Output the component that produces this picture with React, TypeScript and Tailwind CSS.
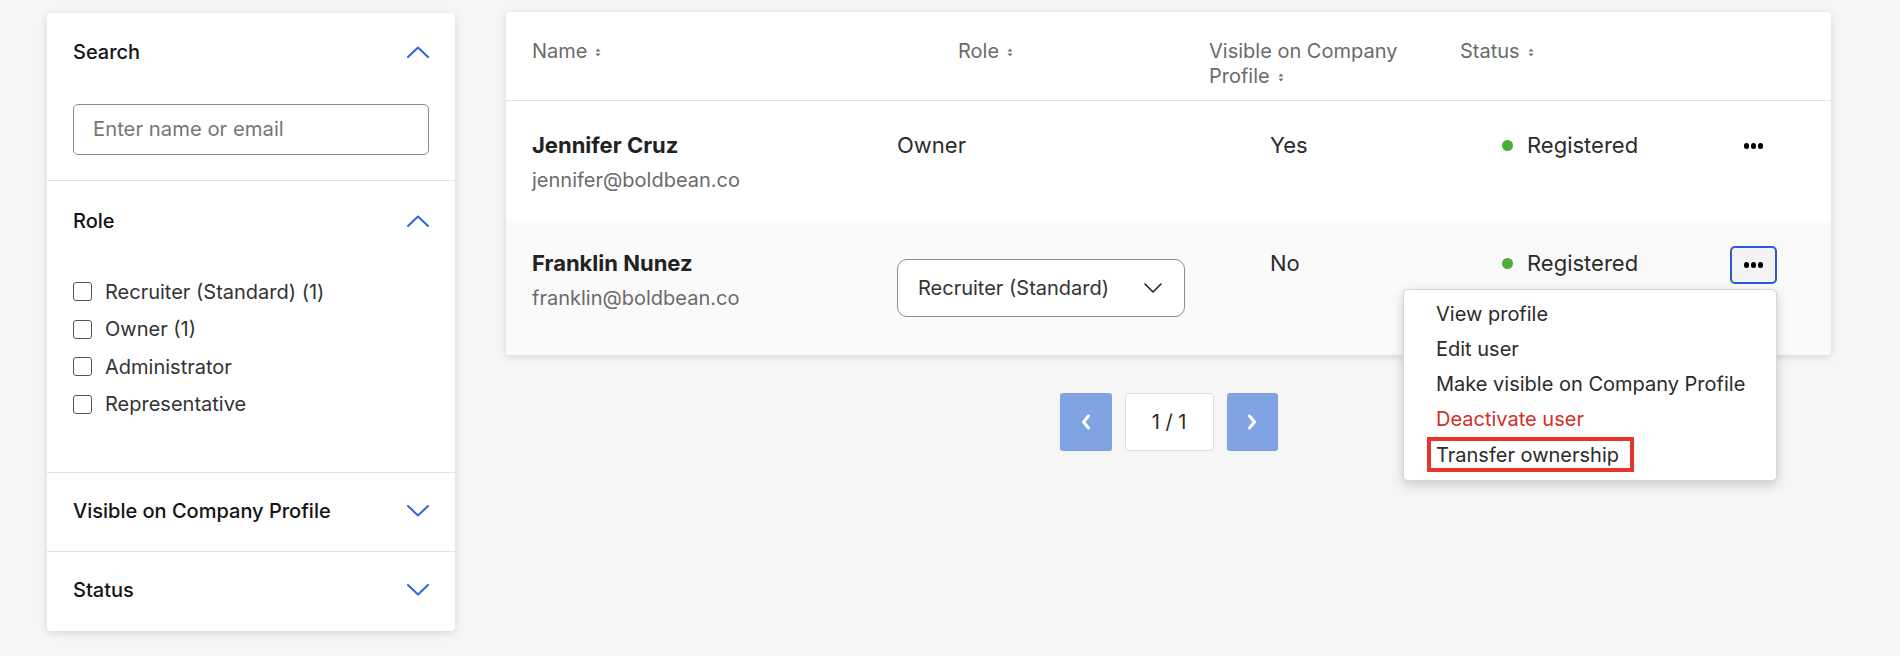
import React from "react";

const Chevron = ({ up }: { up?: boolean }) => (
  <svg width="22" height="12" viewBox="0 0 22 12" fill="none">
    {up ? (
      <path d="M1 11L11 1.5L21 11" stroke="#2b67dd" strokeWidth="2" strokeLinecap="round" strokeLinejoin="round" />
    ) : (
      <path d="M1 1L11 10.5L21 1" stroke="#2b67dd" strokeWidth="2" strokeLinecap="round" strokeLinejoin="round" />
    )}
  </svg>
);

const SortIcon = () => (
  <svg width="6" height="9" viewBox="0 0 6 9" className="ml-[8px] inline-block align-middle">
    <path d="M3 0.5L5.5 3.5H0.5Z" fill="#777" />
    <path d="M3 8.5L5.5 5.5H0.5Z" fill="#777" />
  </svg>
);

const Dots = () => (
  <div className="flex gap-[1.5px]">
    <span className="w-[5.5px] h-[5.5px] rounded-full bg-black" />
    <span className="w-[5.5px] h-[5.5px] rounded-full bg-black" />
    <span className="w-[5.5px] h-[5.5px] rounded-full bg-black" />
  </div>
);

const Section = ({
  title,
  open,
  children,
  cls,
}: {
  title: string;
  open?: boolean;
  children?: React.ReactNode;
  cls: string;
}) => (
  <div className={`px-[26px] ${cls}`}>
    <div className="h-[28px] flex items-center justify-between">
      <span className="text-[20px] font-medium text-[#141414] leading-[28px]">{title}</span>
      <Chevron up={open} />
    </div>
    {children}
  </div>
);

const roles = ["Recruiter (Standard) (1)", "Owner (1)", "Administrator", "Representative"];

export default function App() {
  return (
    <div className="min-h-screen w-full bg-[#f6f6f6] font-['Inter',sans-serif] flex items-start pl-[47px] pt-[12px]">
      <aside className="mt-[1px] w-[408px] shrink-0 bg-white rounded-[4px] shadow-[0_2px_8px_rgba(0,0,0,0.13)]">
        <Section title="Search" open cls="pt-[25px] pb-[25px] border-b border-[#e2e2e2]">
          <div className="mt-[38px] h-[51px] border border-[#8c8c8c] rounded-[5px] flex items-center pl-[19px] text-[20.3px] text-[#777]">
            Enter name or email
          </div>
        </Section>
        <Section title="Role" open cls="pt-[26px] pb-[49px] border-b border-[#e2e2e2]">
          <div className="mt-[38px] flex flex-col">
            {roles.map((r) => (
              <div key={r} className="h-[37.5px] flex items-center gap-[13px]">
                <span className="w-[19px] h-[19px] border-[1.5px] border-[#555] rounded-[3px] bg-white" />
                <span className="text-[20px] text-[#333]">{r}</span>
              </div>
            ))}
          </div>
        </Section>
        <Section title="Visible on Company Profile" cls="pt-[24px] pb-[26px] border-b border-[#e2e2e2]" />
        <Section title="Status" cls="pt-[24px] pb-[27px]" />
      </aside>

      <main className="ml-[51px] w-[1325px] shrink-0 flex flex-col items-center">
        <div className="w-full bg-white rounded-[4px] shadow-[0_2px_8px_rgba(0,0,0,0.13)]">
          {/* header */}
          <div className="h-[89px] border-b border-[#e2e2e2] flex pl-[26px] pt-[27px] text-[20px] leading-[25px] text-[#6b6b6b]">
            <div className="w-[426px]">
              Name
              <SortIcon />
            </div>
            <div className="w-[251px]">
              Role
              <SortIcon />
            </div>
            <div className="w-[251px] pr-[40px]">
              Visible on Company Profile
              <SortIcon />
            </div>
            <div>
              Status
              <SortIcon />
            </div>
          </div>

          {/* row 1 */}
          <div className="h-[120px] flex pl-[26px] pt-[30px] text-[22px] text-[#2b2b2b]">
            <div className="w-[365px]">
              <div className="font-bold leading-[29px] text-[#222]">Jennifer Cruz</div>
              <div className="mt-[7px] text-[20px] leading-[27px] text-[#6b6b6b]">jennifer@boldbean.co</div>
            </div>
            <div className="w-[373px] leading-[29px]">Owner</div>
            <div className="w-[232px] leading-[29px]">Yes</div>
            <div className="w-[228px] h-[29px] flex items-center gap-[14px]">
              <span className="w-[11px] h-[11px] rounded-full bg-[#4ead32]" />
              <span>Registered</span>
            </div>
            <div className="w-[47px] h-[38px] -mt-[4px] flex items-center justify-center">
              <Dots />
            </div>
          </div>

          {/* row 2 */}
          <div className="h-[134px] flex pl-[26px] pt-[28px] bg-[#fafafa] rounded-b-[4px] text-[22px] text-[#2b2b2b]">
            <div className="w-[365px]">
              <div className="font-bold leading-[29px] text-[#222]">Franklin Nunez</div>
              <div className="mt-[7px] text-[20px] leading-[27px] text-[#6b6b6b]">franklin@boldbean.co</div>
            </div>
            <div className="w-[373px] pt-[10px]">
              <div className="w-[288px] h-[58px] bg-white border border-[#8c8c8c] rounded-[10px] flex items-center justify-between pl-[20px] pr-[22px] text-[20px] text-[#333]">
                <span>Recruiter (Standard)</span>
                <svg width="18" height="10" viewBox="0 0 18 10" fill="none">
                  <path d="M1 1L9 9L17 1" stroke="#222" strokeWidth="1.6" strokeLinecap="round" strokeLinejoin="round" />
                </svg>
              </div>
            </div>
            <div className="w-[232px] leading-[29px]">No</div>
            <div className="w-[228px] h-[29px] flex items-center gap-[14px]">
              <span className="w-[11px] h-[11px] rounded-full bg-[#4ead32]" />
              <span>Registered</span>
            </div>
            <div className="relative w-[47px] h-[38px] -mt-[3px]">
              <div className="w-[47px] h-[38px] border-2 border-[#2a5bd7] rounded-[5px] bg-[#f3f3f3] flex items-center justify-center">
                <Dots />
              </div>
              <div className="absolute right-0 top-[43px] z-10 w-[374px] bg-white border border-[#d6d6d6] rounded-[5px] shadow-[0_4px_12px_rgba(0,0,0,0.18)] pt-[6px] pb-[9px] text-[20px] text-[#2b2b2b]">
                <div className="h-[35px] flex items-center pl-[32px]">View profile</div>
                <div className="h-[35px] flex items-center pl-[32px]">Edit user</div>
                <div className="h-[35px] flex items-center pl-[32px]">Make visible on Company Profile</div>
                <div className="h-[35px] flex items-center pl-[32px] text-[#d22f2a]">Deactivate user</div>
                <div className="h-[35px] flex items-center pl-[23px]">
                  <span className="mt-[2px] h-[35px] flex items-center border-[4px] border-[#e8352b] pl-[5px] pr-[11px]">
                    Transfer ownership
                  </span>
                </div>
              </div>
            </div>
          </div>
        </div>

        {/* pagination */}
        <div className="mt-[38px] flex gap-[13px]">
          <div className="w-[52px] h-[58px] bg-[#7fa3e3] rounded-[3px] flex items-center justify-center">
            <svg width="10" height="16" viewBox="0 0 10 16" fill="none">
              <path d="M7.5 2L2.5 8L7.5 14" stroke="white" strokeWidth="3" strokeLinecap="round" strokeLinejoin="round" />
            </svg>
          </div>
          <div className="w-[89px] h-[58px] bg-white border border-[#dddddd] rounded-[4px] flex items-center justify-center text-[20px] text-[#2b2b2b]">
            1 / 1
          </div>
          <div className="w-[51px] h-[58px] bg-[#7fa3e3] rounded-[3px] flex items-center justify-center">
            <svg width="10" height="16" viewBox="0 0 10 16" fill="none">
              <path d="M2.5 2L7.5 8L2.5 14" stroke="white" strokeWidth="3" strokeLinecap="round" strokeLinejoin="round" />
            </svg>
          </div>
        </div>
      </main>
    </div>
  );
}
